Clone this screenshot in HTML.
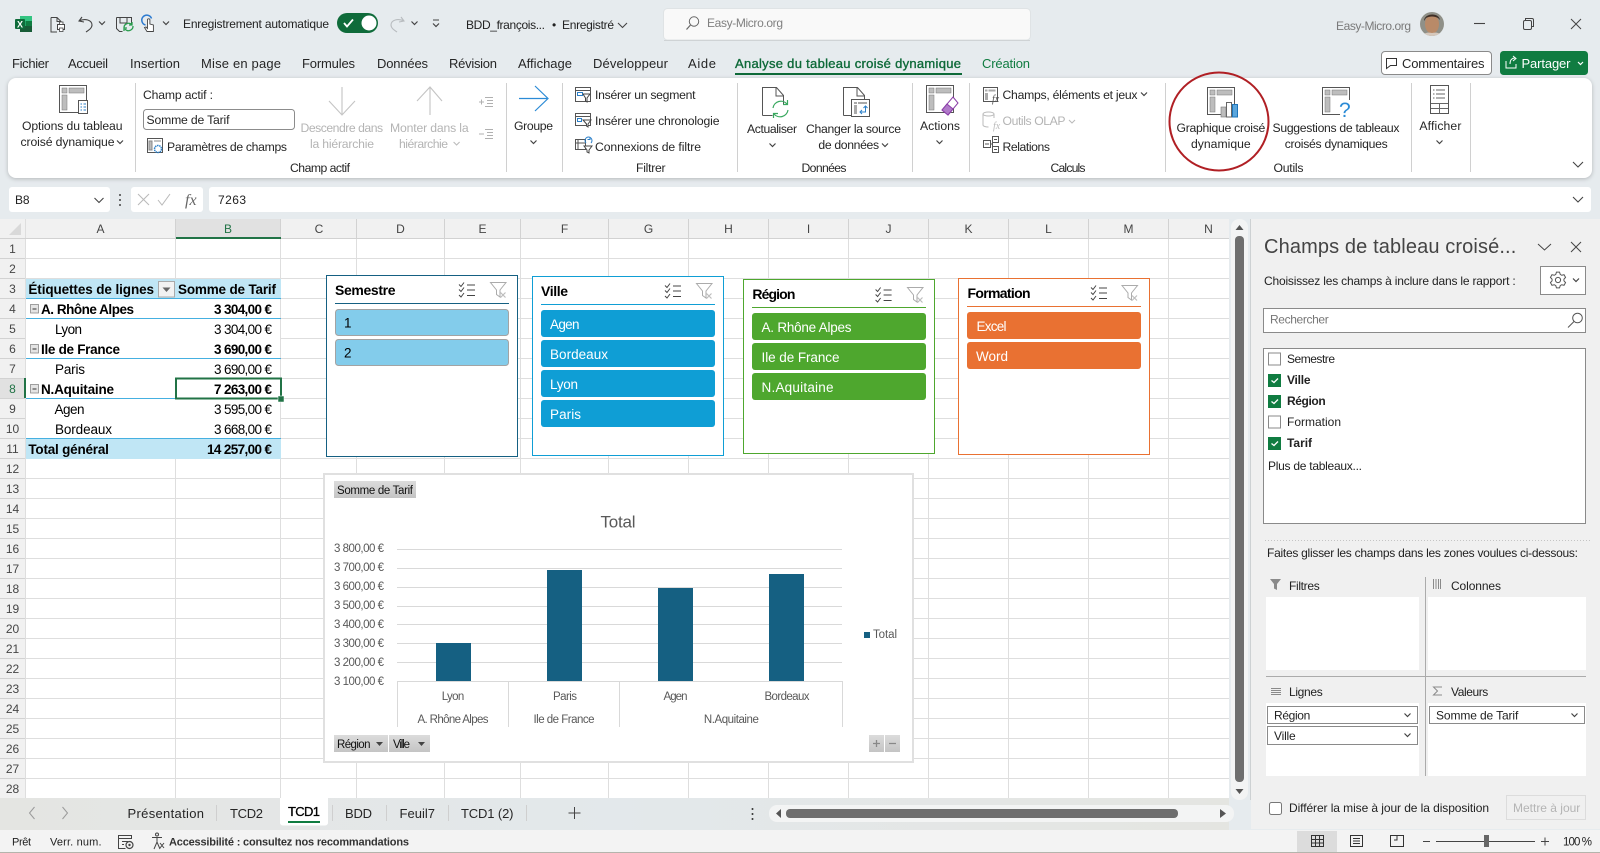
<!DOCTYPE html>
<html lang="fr"><head><meta charset="utf-8"><title>Excel</title>
<style>
html,body{margin:0;padding:0;background:#e6ebee;width:1600px;height:853px;overflow:hidden}
svg{display:block}
text{font-family:"Liberation Sans",sans-serif;font-size:12.2px;fill:#262626}
.d{fill:#b4b4b4}.b{font-weight:bold;fill:#000}.k{fill:#000;font-size:13.5px}
.h{fill:#454545;font-size:12px}.w{fill:#fff;font-size:13.5px}
.t{font-size:13px}.c{fill:#595959;font-size:11.5px}.p{font-size:12px;fill:#222}
.gr{fill:none;stroke:#555;stroke-width:1}
</style></head><body>
<svg width="1600" height="853" viewBox="0 0 1600 853" xmlns="http://www.w3.org/2000/svg">
<defs>
<g id="ca"><path d="M-3-1.5L0 1.5L3-1.5" fill="none" stroke="#444" stroke-width="1.2"/></g>
<g id="ms"><path d="M0 2l2 2 3-4M0 7l2 2 3-4M0 12.500l2 2 3-4" fill="none" stroke="#444" stroke-width="1"/><path d="M8 2.500H16M8 7.500H16M8 13H16" stroke="#444" stroke-width="1"/></g>
<g id="fc"><path d="M.5.500H16L10 8V15L6.500 12.500V8Z" fill="none" stroke="#ababab"/><path d="M10.500 10.500l5 5m0-5l-5 5" stroke="#bdbdbd" stroke-width="1.200"/></g>
<g id="pv"><rect x=".5" y=".5" width="27" height="27" fill="#fff" stroke="#555"/><rect x="3" y="3" width="5" height="5" fill="#bdbdbd" stroke="#777" stroke-width=".5"/><rect x="10" y="3" width="15" height="5" fill="#bdbdbd" stroke="#777" stroke-width=".5"/><rect x="3" y="10" width="5" height="15" fill="#bdbdbd" stroke="#777" stroke-width=".5"/></g>
<g id="cb"><rect width="13" height="13" fill="#107c41"/><path d="M3.500 6.500l2.500 2 4-4" fill="none" stroke="#fff" stroke-width="1.300"/></g>
</defs>

<rect width="1600" height="853" fill="#e6ebee"/>

<!-- title bar -->
<rect x="20" y="16" width="12" height="16" rx="1" fill="#21a366"/><rect x="20" y="16" width="12" height="5" fill="#33c481"/><rect x="20" y="26" width="12" height="6" fill="#185c37"/><rect x="26" y="21" width="6" height="5" fill="#107c41"/>
<rect x="15" y="19" width="10" height="10" rx="1" fill="#0f6b3a"/><text x="17" y="27.500" style="font-size:9px;font-weight:bold;fill:#fff">X</text>
<path d="M51 17.500h6l4 4v3M51 17.500V32h6M57 17.500v4h4" fill="none" stroke="#444"/><rect x="57.500" y="24.500" width="7" height="5" fill="#fff" stroke="#444"/><rect x="59.500" y="22" width="3.500" height="2.500" fill="#fff" stroke="#444" stroke-width=".8"/><rect x="59.500" y="28" width="3.500" height="3.500" fill="#fff" stroke="#444" stroke-width=".8"/>
<path d="M82 17l-3 4 5 1M79 21c6-3 13-1 13 4 0 3-3 5-6 7" fill="none" stroke="#444" stroke-width="1.100"/>
<use href="#ca" x="102" y="23"/>
<path d="M116.500 17.500h15v8M116.500 17.500v11l3 3h3M120 18v5h7v-5" fill="none" stroke="#444"/>
<path d="M124 28a4.500 4.500 0 0 1 8-3M133 26a4.500 4.500 0 0 1-8 3M132 22v3h-3M124 31v-3h3" fill="none" stroke="#2a9d4e" stroke-width="1.300"/>
<path d="M145.500 25a5 5 0 1 1 6-6.500" fill="none" stroke="#2d7bd0" stroke-width="1.500"/><path d="M147 31.500l-2.500-4 1.500-.5 1.500 1.500v-8.500a1.200 1.200 0 0 1 2.400 0v4l3.500 1v6.500z" fill="#fff" stroke="#444" stroke-width=".9"/>
<use href="#ca" x="166" y="23"/>
<text x="183" y="28" textLength="146" class="p">Enregistrement automatique</text>
<rect x="337" y="13" width="41" height="20" rx="10" fill="#0f6b3a"/><path d="M344 23l3 3.500 6-7" fill="none" stroke="#fff" stroke-width="1.800"/><circle cx="369" cy="23" r="7.500" fill="#fff"/>
<path d="M401 17l3 4-5 1M404 21c-6-3-13-1-13 4 0 3 3 5 6 7" fill="none" stroke="#b8bcbf" stroke-width="1.100"/>
<use href="#ca" x="414.500" y="23"/><path d="M433 20h6" stroke="#444"/><use href="#ca" x="436" y="25"/>
<text x="466" y="29" textLength="79" class="p">BDD_françois...</text><text x="552" y="29" class="p">•</text><text x="562" y="29" textLength="52" class="p">Enregistré</text>
<path d="M618 23l4.500 4.500L627 23" fill="none" stroke="#444" stroke-width="1.100"/>
<rect x="663.500" y="8.500" width="367" height="31.500" rx="4" fill="#f9f9f9" stroke="#dfe3e5"/><path d="M664 40.500h366" stroke="#cfd3d5"/>
<circle cx="694" cy="21.500" r="4.700" fill="none" stroke="#666"/><path d="M690.500 25l-4 4.500" stroke="#666" stroke-width="1.200"/>
<text x="707" y="27" textLength="76" class="p" style="fill:#808080">Easy-Micro.org</text>
<text x="1336" y="30" textLength="75" class="p" style="fill:#7a7a7a">Easy-Micro.org</text>
<clipPath id="av"><circle cx="1432" cy="24" r="12"/></clipPath>
<g clip-path="url(#av)"><rect x="1420" y="12" width="24" height="24" fill="#8f9088"/><ellipse cx="1432" cy="24" rx="7" ry="9.500" fill="#b98a68"/><path d="M1424 21c0-8 15-9 16-1l-2-2c-4-2-8-2-12 0z" fill="#3e2e26"/><path d="M1422 37c1-4 5-5 10-4 5-1 9 0 10 4z" fill="#d6c8bc"/></g>
<path d="M1474 23.500h11" stroke="#444" stroke-width="1.100"/>
<rect x="1523.500" y="20.500" width="8" height="9" rx="1.500" fill="none" stroke="#444"/><path d="M1525.500 20v-1.500h6.500a1.500 1.500 0 0 1 1.500 1.500v6.500h-1.500" fill="none" stroke="#444"/>
<path d="M1571 19l10 10M1581 19l-10 10" stroke="#444" stroke-width="1"/>

<!-- tabs -->
<g class="t">
<text x="12" y="68" textLength="37" class="t">Fichier</text>
<text x="68" y="68" textLength="40" class="t">Accueil</text>
<text x="130" y="68" textLength="50" class="t">Insertion</text>
<text x="201" y="68" textLength="80" class="t">Mise en page</text>
<text x="302" y="68" textLength="53" class="t">Formules</text>
<text x="377" y="68" textLength="51" class="t">Données</text>
<text x="449" y="68" textLength="48" class="t">Révision</text>
<text x="518" y="68" textLength="54" class="t">Affichage</text>
<text x="593" y="68" textLength="75" class="t">Développeur</text>
<text x="688" y="68" textLength="28" class="t">Aide</text>
<text x="735" y="68" textLength="226" class="t" style="fill:#0e6a39;stroke:#0e6a39;stroke-width:.35px">Analyse du tableau croisé dynamique</text>
<text x="982" y="68" textLength="48" class="t" style="fill:#107c41">Création</text>
</g>
<rect x="735" y="73" width="227" height="2" fill="#0e6a39"/>
<rect x="1381.500" y="51.500" width="110" height="23" rx="3.500" fill="#fff" stroke="#8a8a8a"/>
<path d="M1386.500 58.500h10v7h-6l-4 3z" fill="none" stroke="#333"/>
<text x="1402" y="68" textLength="82.500" class="t">Commentaires</text>
<rect x="1500" y="51" width="88" height="24" rx="3.500" fill="#107c41"/>
<path d="M1506 61v7h10v-4M1510 64c0-4 2-6 5-6M1513 56l3 2.500-3 2.500" fill="none" stroke="#fff"/>
<text x="1521.500" y="68" textLength="49" class="t" style="fill:#fff">Partager</text>
<path d="M1578 62l2.500 2.500L1583 62" fill="none" stroke="#fff" stroke-width="1.200"/>

<!-- ribbon -->
<rect x="8" y="78" width="1584" height="100" rx="8" fill="#fff" style="filter:drop-shadow(0 1px 2px rgba(0,0,0,.22))"/>
<path d="M135.500 83V172M506.500 83V172M562.500 83V172M737.500 83V172M912.500 83V172M969.500 83V172M1165.500 83V172M1411.500 83V172M1470.500 83V172" stroke="#d0d0d0"/>

<!-- options -->
<use href="#pv" x="59" y="85"/><rect x="78.500" y="100.500" width="9" height="13" fill="#fff" stroke="#555"/><path d="M80.500 104h1.500M83.500 104h2.500M80.500 107h1.500M83.500 107h2.500M80.500 110h1.500M83.500 110h2.500" stroke="#2a7fc9"/>
<text x="22" y="130" textLength="100.500">Options du tableau</text>
<text x="20.500" y="146" textLength="94">croisé dynamique</text><use href="#ca" x="120" y="142"/>

<text x="143" y="99" textLength="70">Champ actif :</text>
<rect x="143.500" y="109.500" width="151" height="20" rx="3" fill="#fff" stroke="#8c8c8c"/>
<text x="146.500" y="124" textLength="83">Somme de Tarif</text>
<rect x="147.500" y="138.500" width="15" height="14" fill="#fff" stroke="#555"/><path d="M149 141h3v9h-3zM154 141h7" stroke="#888" fill="#bbb"/><circle cx="158" cy="149" r="3.500" fill="none" stroke="#2a7fc9" stroke-width="1.500" stroke-dasharray="1.500 .7"/>
<text x="167" y="151" textLength="120">Paramètres de champs</text>

<path d="M342 87V114M329 101L342 115L355 101" fill="none" stroke="#c4c4c4" stroke-width="1.100"/>
<text x="300.500" y="132" textLength="82.600" class="d">Descendre dans</text>
<text x="310" y="148" textLength="64" class="d">la hiérarchie</text>
<path d="M430 115V88M417 101L430 87L442 101" fill="none" stroke="#c4c4c4" stroke-width="1.100"/>
<text x="390" y="132" textLength="78.600" class="d">Monter dans la</text>
<text x="399" y="148" textLength="49" class="d">hiérarchie</text>
<path d="M453.600 142l3 3 3-3" fill="none" stroke="#bbb" stroke-width="1.100"/>
<path d="M485 97.500h8M487 100.500h6M487 103.500h6M485 106.500h8M485 129.500h8M487 132.500h6M487 135.500h6M485 138.500h8M479 102h5M481.500 99.500v5M479 134h5" stroke="#b0b0b0"/>
<text x="290" y="172" textLength="60">Champ actif</text>

<path d="M519 98.500H547M535 86L548 98.500L535 111" fill="none" stroke="#2b8bd6" stroke-width="1.200"/>
<text x="514" y="130" textLength="39">Groupe</text><use href="#ca" x="533.500" y="142"/>

<!-- filtrer -->
<g fill="none" stroke="#555">
<rect x="575.500" y="87.500" width="15" height="14" fill="#fff"/><path d="M576 90.500h14"/><rect x="577.500" y="92.500" width="5" height="3" stroke="#2a7fc9"/><path d="M583 94h7l-3 4v4l-1.500-1v-3z" stroke="#444" fill="#fff"/>
<rect x="575.500" y="113.500" width="15" height="12" fill="#fff"/><path d="M576 116.500h14"/><rect x="577.500" y="118.500" width="4" height="3" stroke="#2a7fc9"/><path d="M583 120h8l-3 4v3l-1.500-1v-2z" stroke="#444" fill="#fff"/>
<path d="M575.500 139.500h10v10h-10zM578 139v10M575.500 143h10"/><path d="M584 146h8l-3 4v3l-2-1v-2z" stroke="#444" fill="#fff"/><path d="M586 143a3.500 3.500 0 1 1 5 0M590 137v2.500h-2.500" stroke="#2a7fc9"/>
</g>
<text x="595" y="99" textLength="100.500">Insérer un segment</text>
<text x="595" y="125" textLength="124.500">Insérer une chronologie</text>
<text x="595" y="151" textLength="106">Connexions de filtre</text>
<text x="636" y="172" textLength="29.600">Filtrer</text>

<!-- données -->
<path d="M762.500 115.500V87.500h14l7 8v9M776 88v8h7.500M762.500 115.500h10" fill="none" stroke="#555"/>
<path d="M773 108a8 8 0 0 1 14-4M788 110a8 8 0 0 1-14 4M787.500 100v4.500h-4.500M773.500 118v-4.500h4.500" fill="none" stroke="#39a85f" stroke-width="1.200"/>
<text x="747" y="133" textLength="50">Actualiser</text><use href="#ca" x="772.500" y="145"/>
<path d="M843.500 115.500V87.500h14l7 8v4M857 88v8h7.500M843.500 115.500h8" fill="none" stroke="#555"/>
<rect x="851.500" y="99.500" width="18" height="17" fill="#fff" stroke="#555"/><rect x="854" y="102" width="3" height="2" fill="#aaa"/><rect x="858" y="102" width="9" height="2" fill="#aaa"/><rect x="854" y="105" width="3" height="9" fill="#aaa"/><path d="M865.500 106v6h-5.500M862 110l-2 2 2 2M863.500 108l2-2 2 2" fill="none" stroke="#2a7fc9"/>
<text x="806" y="133" textLength="95">Changer la source</text>
<text x="818.400" y="149" textLength="60.700">de données</text><use href="#ca" x="885" y="145"/>
<text x="801.500" y="172" textLength="45">Données</text>

<!-- actions -->
<use href="#pv" x="926" y="85"/><path d="M953 97l5 6-10 12-6-5z" fill="#fff" stroke="#8b3ea8"/><path d="M947 104l6 5-5 6-6-5z" fill="#b07ac9" stroke="#8b3ea8"/>
<text x="920" y="130" textLength="40">Actions</text><use href="#ca" x="939.500" y="142"/>

<!-- calculs -->
<g fill="none" stroke="#555">
<rect x="983.500" y="87.500" width="14" height="14" fill="#fff"/><rect x="985" y="89.500" width="2.500" height="2" fill="#aaa" stroke="none"/><rect x="988.500" y="89.500" width="7" height="2" fill="#aaa" stroke="none"/><rect x="985" y="93" width="3" height="7" fill="#aaa" stroke="none"/>
<rect x="983.500" y="140.500" width="7" height="7" fill="#fff"/><rect x="992.500" y="136.500" width="6" height="6" fill="#fff"/><rect x="992.500" y="146.500" width="6" height="6" fill="#fff"/><path d="M985 144h4M994 139.500h3M994 149.500h3M990.500 144h2v-2M992.500 144v4"/>
</g>
<text x="992" y="102" style="font-family:'Liberation Serif',serif;font-style:italic;font-size:10px;fill:#555">fx</text>
<text x="1002.500" y="99" textLength="135">Champs, éléments et jeux</text><use href="#ca" x="1144" y="94"/>
<ellipse cx="988.500" cy="114" rx="5.500" ry="2" fill="none" stroke="#bbb"/><path d="M983 114v11c0 1 2 2 5.500 2M994 114v4" fill="none" stroke="#bbb"/><text x="993" y="129" style="font-family:'Liberation Serif',serif;font-style:italic;font-size:10px;fill:#bbb">fx</text>
<text x="1002.500" y="125" textLength="63" class="d">Outils OLAP</text>
<path d="M1069 120l3 3 3-3" fill="none" stroke="#bbb" stroke-width="1.100"/>
<text x="1002.500" y="151" textLength="47.500">Relations</text>
<text x="1050.500" y="172" textLength="35">Calculs</text>

<!-- outils -->
<use href="#pv" x="1207" y="87"/><rect x="1221" y="107" width="5" height="10" fill="#bdbdbd" stroke="#777" stroke-width=".6"/><rect x="1226.500" y="102.500" width="5" height="14.500" fill="#fff" stroke="#666"/><rect x="1232.500" y="104.500" width="5" height="12.500" fill="#5aa6dd" stroke="#1f74b8"/>
<text x="1176.500" y="132" textLength="88.800">Graphique croisé</text>
<text x="1191" y="148" textLength="59.700">dynamique</text>
<ellipse cx="1219" cy="121.500" rx="49.500" ry="49" fill="none" stroke="#b01f24" stroke-width="2"/>
<use href="#pv" x="1322" y="87"/><rect x="1340" y="100" width="13" height="17" fill="#fff"/><text x="1339" y="117" style="font-size:21px;fill:#2b8bd6">?</text>
<text x="1272.500" y="132" textLength="127">Suggestions de tableaux</text>
<text x="1284.700" y="148" textLength="103">croisés dynamiques</text>
<text x="1273.500" y="172" textLength="30">Outils</text>
<rect x="1430.500" y="85.500" width="18" height="28" fill="#fff" stroke="#555"/><path d="M1431 103.500h17M1431 108.500h17M1439.500 103.500v10M1433 90h1.500M1436 90h9M1433 94h1.500M1436 94h9M1433 98h1.500M1436 98h9" stroke="#666"/>
<text x="1419.400" y="130" textLength="42">Afficher</text><use href="#ca" x="1439.500" y="142"/>
<path d="M1573 162l5 5 5-5" fill="none" stroke="#444" stroke-width="1.100"/>

<!-- formula bar -->
<rect x="9" y="187" width="101" height="25" rx="3" fill="#fff"/>
<text x="15" y="204" textLength="14.500" class="p">B8</text>
<path d="M94.500 198l4.500 4.500 4.500-4.500" fill="none" stroke="#444" stroke-width="1.100"/>
<circle cx="120" cy="195" r="1" fill="#444"/><circle cx="120" cy="200" r="1" fill="#444"/><circle cx="120" cy="205" r="1" fill="#444"/>
<rect x="131" y="187" width="72" height="25" rx="3" fill="#fff"/>
<path d="M138 194l11 11M149 194l-11 11M158 200l4 5 8-11" fill="none" stroke="#b9b9b9" stroke-width="1"/>
<text x="185" y="205" style="font-family:'Liberation Serif',serif;font-style:italic;font-size:16px;fill:#666">fx</text>
<rect x="209" y="187" width="1382" height="25" rx="3" fill="#fff"/>
<text x="218" y="204" textLength="28" class="p">7263</text>
<path d="M1573 197l5 5 5-5" fill="none" stroke="#444" stroke-width="1.100"/>

<!-- sheet -->
<rect x="0" y="219" width="1229" height="579" fill="#fff"/>
<rect x="0" y="219" width="1229" height="20" fill="#f1f1f1"/>
<rect x="0" y="239" width="25" height="559" fill="#f1f1f1"/>
<path d="M21 223V235H9Z" fill="#d9d9d9"/>
<rect x="176" y="219" width="105" height="20" fill="#e1e1e1"/>
<rect x="0" y="378" width="25" height="20" fill="#e1e1e1"/>
<path d="M25.500 219V798M175.500 239V798M280.500 239V798M356.500 239V798M444.500 239V798M520.500 239V798M608.500 239V798M688.500 239V798M768.500 239V798M848.500 239V798M928.500 239V798M1008.500 239V798M1088.500 239V798M1168.500 239V798" stroke="#dedede"/>
<path d="M26 258.500H1229M26 278.500H1229M26 298.500H1229M26 318.500H1229M26 338.500H1229M26 358.500H1229M26 378.500H1229M26 398.500H1229M26 418.500H1229M26 438.500H1229M26 458.500H1229M26 478.500H1229M26 498.500H1229M26 518.500H1229M26 538.500H1229M26 558.500H1229M26 578.500H1229M26 598.500H1229M26 618.500H1229M26 638.500H1229M26 658.500H1229M26 678.500H1229M26 698.500H1229M26 718.500H1229M26 738.500H1229M26 758.500H1229M26 778.500H1229" stroke="#dedede"/>
<path d="M175.500 219V238M280.500 219V238M356.500 219V238M444.500 219V238M520.500 219V238M608.500 219V238M688.500 219V238M768.500 219V238M848.500 219V238M928.500 219V238M1008.500 219V238M1088.500 219V238M1168.500 219V238" stroke="#d2d2d2"/>
<path d="M0 238.500H1229M0 258.500H25M0 278.500H25M0 298.500H25M0 318.500H25M0 338.500H25M0 358.500H25M0 378.500H25M0 398.500H25M0 418.500H25M0 438.500H25M0 458.500H25M0 478.500H25M0 498.500H25M0 518.500H25M0 538.500H25M0 558.500H25M0 578.500H25M0 598.500H25M0 618.500H25M0 638.500H25M0 658.500H25M0 678.500H25M0 698.500H25M0 718.500H25M0 738.500H25M0 758.500H25M0 778.500H25" stroke="#d2d2d2"/>
<rect x="176" y="237" width="105" height="2" fill="#217346"/>
<rect x="24" y="378" width="2" height="20" fill="#217346"/>
<g text-anchor="middle">
<text x="100.500" y="233" class="h">A</text><text x="228" y="233" class="h" style="fill:#217346">B</text><text x="319" y="233" class="h">C</text><text x="400.500" y="233" class="h">D</text><text x="482.500" y="233" class="h">E</text><text x="564.500" y="233" class="h">F</text><text x="648.500" y="233" class="h">G</text><text x="728.500" y="233" class="h">H</text><text x="808.500" y="233" class="h">I</text><text x="888.500" y="233" class="h">J</text><text x="968.500" y="233" class="h">K</text><text x="1048.500" y="233" class="h">L</text><text x="1128.500" y="233" class="h">M</text><text x="1208.500" y="233" class="h">N</text>
<text x="12.500" y="253" class="h">1</text><text x="12.500" y="273" class="h">2</text><text x="12.500" y="293" class="h">3</text><text x="12.500" y="313" class="h">4</text><text x="12.500" y="333" class="h">5</text><text x="12.500" y="353" class="h">6</text><text x="12.500" y="373" class="h">7</text><text x="12.500" y="393" class="h" style="fill:#217346">8</text><text x="12.500" y="413" class="h">9</text><text x="12.500" y="433" class="h">10</text><text x="12.500" y="453" class="h">11</text><text x="12.500" y="473" class="h">12</text><text x="12.500" y="493" class="h">13</text><text x="12.500" y="513" class="h">14</text><text x="12.500" y="533" class="h">15</text><text x="12.500" y="553" class="h">16</text><text x="12.500" y="573" class="h">17</text><text x="12.500" y="593" class="h">18</text><text x="12.500" y="613" class="h">19</text><text x="12.500" y="633" class="h">20</text><text x="12.500" y="653" class="h">21</text><text x="12.500" y="673" class="h">22</text><text x="12.500" y="693" class="h">23</text><text x="12.500" y="713" class="h">24</text><text x="12.500" y="733" class="h">25</text><text x="12.500" y="753" class="h">26</text><text x="12.500" y="773" class="h">27</text><text x="12.500" y="793" class="h">28</text>
</g>

<!-- pivot -->
<rect x="26" y="279" width="254.500" height="180" fill="#fff"/>
<path d="M280.500 279V459" stroke="#dedede"/>
<rect x="26" y="279" width="255" height="19" fill="#c0e6f5"/>
<rect x="26" y="439" width="255" height="20" fill="#c0e6f5"/>
<path d="M26 298.500H281M26 318.500H281M26 358.500H281M26 398.500H175M26 438.500H281" stroke="#45b0e1"/>
<text x="28.400" y="294" textLength="125.600" class="b" style="font-size:13.500px">Étiquettes de lignes</text>
<rect x="158.500" y="281.500" width="16" height="15.500" fill="#f2f2f2" stroke="#aaa"/><path d="M162.500 287.500h8l-4 4.500z" fill="#666"/>
<text x="178" y="294" textLength="98" class="b" style="font-size:13.500px">Somme de Tarif</text>
<g fill="#e4e4e4" stroke="#8a8a8a" stroke-width=".8"><rect x="30.500" y="304.500" width="8" height="8.500"/><rect x="30.500" y="344.500" width="8" height="8.500"/><rect x="30.500" y="384.500" width="8" height="8.500"/></g>
<path d="M32.500 309h4M32.500 349h4M32.500 389h4" stroke="#333"/>
<text x="41" y="314" textLength="93" class="b" style="font-size:13.500px">A. Rhône Alpes</text>
<text x="41" y="354" textLength="79" class="b" style="font-size:13.500px">Ile de France</text>
<text x="41" y="394" textLength="73" class="b" style="font-size:13.500px">N.Aquitaine</text>
<text x="55" y="334" textLength="27" class="k">Lyon</text>
<text x="55" y="374" textLength="30" class="k">Paris</text>
<text x="54.500" y="414" textLength="30" class="k">Agen</text>
<text x="55" y="434" textLength="57" class="k">Bordeaux</text>
<text x="28.400" y="454" textLength="80.500" class="b" style="font-size:13.500px">Total général</text>
<g text-anchor="end">
<text x="272" y="314" textLength="58" class="b" style="font-size:13.500px">3 304,00 €</text>
<text x="272" y="334" textLength="58" class="k">3 304,00 €</text>
<text x="272" y="354" textLength="58" class="b" style="font-size:13.500px">3 690,00 €</text>
<text x="272" y="374" textLength="58" class="k">3 690,00 €</text>
<text x="272" y="394" textLength="58" class="b" style="font-size:13.500px">7 263,00 €</text>
<text x="272" y="414" textLength="58" class="k">3 595,00 €</text>
<text x="272" y="434" textLength="58" class="k">3 668,00 €</text>
<text x="272" y="454" textLength="65" class="b" style="font-size:13.500px">14 257,00 €</text>
</g>
<rect x="176" y="378.500" width="105" height="20" fill="none" stroke="#217346" stroke-width="2"/>
<rect x="278" y="396" width="6" height="6" fill="#217346" stroke="#fff" stroke-width=".5"/>

<!-- slicers -->
<rect x="326.500" y="275.500" width="191" height="181" fill="#fff" stroke="#156082"/>
<text x="335" y="295" textLength="60.500" class="b" style="font-size:14px">Semestre</text>
<use href="#ms" x="459" y="282.500"/><use href="#fc" x="490" y="282"/>
<path d="M335 303.500H509" stroke="#156082"/>
<rect x="335.500" y="309.500" width="173" height="26" rx="3" fill="#83cceb" stroke="#a3a3a3"/>
<rect x="335.500" y="339.500" width="173" height="26" rx="3" fill="#83cceb" stroke="#a3a3a3"/>
<text x="344" y="327.500" class="k">1</text><text x="344" y="357.500" class="k">2</text>

<rect x="532.500" y="276.500" width="191" height="179" fill="#fff" stroke="#0f9ed5"/>
<text x="541" y="296" textLength="27" class="b" style="font-size:14px">Ville</text>
<use href="#ms" x="665" y="283.500"/><use href="#fc" x="696" y="283"/>
<path d="M541 304.500H715" stroke="#0f9ed5"/>
<g fill="#0f9ed5"><rect x="541" y="310" width="174" height="27" rx="3"/><rect x="541" y="340" width="174" height="27" rx="3"/><rect x="541" y="370" width="174" height="27" rx="3"/><rect x="541" y="400" width="174" height="27" rx="3"/></g>
<text x="550" y="329" textLength="29.500" class="w">Agen</text><text x="550" y="359" textLength="58" class="w">Bordeaux</text><text x="550" y="389" textLength="28" class="w">Lyon</text><text x="550" y="419" textLength="31" class="w">Paris</text>

<rect x="743.500" y="279.500" width="191" height="174" fill="#fff" stroke="#4ea72e"/>
<text x="752.400" y="299" textLength="43" class="b" style="font-size:14px">Région</text>
<use href="#ms" x="875.600" y="287.500"/><use href="#fc" x="907" y="287"/>
<path d="M752 307.500H926" stroke="#4ea72e"/>
<g fill="#4ea72e"><rect x="752" y="313" width="174" height="27" rx="3"/><rect x="752" y="343" width="174" height="27" rx="3"/><rect x="752" y="373" width="174" height="27" rx="3"/></g>
<text x="761.500" y="332" textLength="90" class="w">A. Rhône Alpes</text><text x="761.500" y="362" textLength="78" class="w">Ile de France</text><text x="761.500" y="392" textLength="72" class="w">N.Aquitaine</text>

<rect x="958.500" y="278.500" width="191" height="176" fill="#fff" stroke="#e97132"/>
<text x="967.500" y="298" textLength="63" class="b" style="font-size:14px">Formation</text>
<use href="#ms" x="1091" y="285.500"/><use href="#fc" x="1121.500" y="285"/>
<path d="M967 306.500H1141" stroke="#e97132"/>
<g fill="#e97132"><rect x="967" y="312" width="174" height="27" rx="3"/><rect x="967" y="342" width="174" height="27" rx="3"/></g>
<text x="976.500" y="331" textLength="30" class="w">Excel</text><text x="976" y="361" textLength="32" class="w">Word</text>

<!-- chart -->
<rect x="324" y="474" width="589" height="288" fill="#fff" stroke="#e0e0e0" stroke-width="2"/>
<defs><linearGradient id="bt" x1="0" x2="0" y1="0" y2="1"><stop offset="0" stop-color="#dcdcdc"/><stop offset="1" stop-color="#c4c4c4"/></linearGradient></defs>
<rect x="334" y="481" width="82" height="17" fill="url(#bt)"/>
<text x="337" y="494" textLength="76" style="font-size:11.500px;fill:#111">Somme de Tarif</text>
<text x="618" y="527.500" text-anchor="middle" textLength="35" style="font-size:17px;fill:#595959">Total</text>
<path d="M397 549.500H842M397 568.500H842M397 587.500H842M397 606.500H842M397 624.500H842M397 643.500H842M397 662.500H842M397 681.500H842M397.500 681V727M508.500 681V727M619.500 681V727M842.500 681V727" stroke="#d9d9d9"/>
<g fill="#156082"><rect x="436" y="643" width="35" height="38"/><rect x="547" y="570" width="35" height="111"/><rect x="658" y="588" width="35" height="93"/><rect x="769" y="574" width="35" height="107"/></g>
<text x="334" y="552" textLength="50" class="c">3 800,00 €</text><text x="334" y="571" textLength="50" class="c">3 700,00 €</text><text x="334" y="590" textLength="50" class="c">3 600,00 €</text><text x="334" y="609" textLength="50" class="c">3 500,00 €</text><text x="334" y="628" textLength="50" class="c">3 400,00 €</text><text x="334" y="647" textLength="50" class="c">3 300,00 €</text><text x="334" y="666" textLength="50" class="c">3 200,00 €</text><text x="334" y="685" textLength="50" class="c">3 100,00 €</text>
<g text-anchor="middle"><text x="453" y="700" textLength="22.600" class="c">Lyon</text><text x="565" y="700" textLength="24" class="c">Paris</text><text x="675.500" y="700" textLength="24" class="c">Agen</text><text x="787" y="700" textLength="45" class="c">Bordeaux</text><text x="453" y="723" textLength="71" class="c">A. Rhône Alpes</text><text x="564" y="723" textLength="61" class="c">Ile de France</text><text x="731.400" y="723" textLength="55" class="c">N.Aquitaine</text></g>
<rect x="864" y="632" width="6" height="6" fill="#156082"/>
<text x="873" y="638" textLength="24" class="c">Total</text>
<rect x="334" y="735" width="54" height="17" fill="url(#bt)"/><rect x="389" y="735" width="41" height="17" fill="url(#bt)"/>
<text x="337" y="748" textLength="33.500" style="font-size:11.500px;fill:#111">Région</text><path d="M376 742h7l-3.500 4z" fill="#444"/>
<text x="393" y="748" textLength="17" style="font-size:11.500px;fill:#111">Ville</text><path d="M418 742h7l-3.500 4z" fill="#444"/>
<rect x="869" y="735" width="15" height="17" fill="url(#bt)"/><rect x="885" y="735" width="15" height="17" fill="url(#bt)"/>
<path d="M873 743.500h7M876.500 740v7M889 743.500h7" stroke="#888" stroke-width="1.300"/>

<!-- v scrollbar -->
<rect x="1231" y="219" width="17" height="581" rx="8" fill="#f3f4f4"/>
<path d="M1235.500 230l4-5 4 5z" fill="#555"/>
<rect x="1235" y="236" width="9" height="546" rx="4" fill="#6e6e6e"/>
<path d="M1235.500 789l4 5 4-5z" fill="#555"/>

<!-- panel -->
<rect x="1251" y="219" width="349" height="610" fill="#f0f0f0"/>
<path d="M1250.500 219V829" stroke="#cdd1d3"/>
<text x="1264" y="253" textLength="252.300" style="font-size:20px;fill:#444">Champs de tableau croisé...</text>
<path d="M1538 244l6.500 6 6.500-6M1571 242l10 10M1581 242l-10 10" fill="none" stroke="#444"/>
<text x="1264" y="285" textLength="251.700" class="p">Choisissez les champs à inclure dans le rapport :</text>
<rect x="1540.500" y="266.500" width="45" height="28" fill="#fff" stroke="#8a8a8a"/>
<g transform="translate(1558 280)" fill="none" stroke="#555"><circle r="2.600"/><path d="M5.940 .84L7.560 2.600L6.040 5.250L3.690 4.730L2.250 5.560L1.530 7.850L-1.530 7.850L-2.250 5.560L-3.690 4.730L-6.040 5.250L-7.560 2.600L-5.940 .84L-5.940 -.84L-7.560 -2.600L-6.040 -5.250L-3.690 -4.730L-2.250 -5.560L-1.530 -7.850L1.530 -7.850L2.250 -5.560L3.690 -4.730L6.040 -5.250L7.560 -2.600L5.940 -.84Z"/></g>
<use href="#ca" x="1576" y="280"/>
<rect x="1263.500" y="308.500" width="322" height="24" fill="#fff" stroke="#8a8a8a"/>
<text x="1270" y="323.500" textLength="58.700" class="p" style="fill:#777">Rechercher</text>
<circle cx="1577.500" cy="318" r="4.800" fill="none" stroke="#555"/><path d="M1574 321.500l-6 6" stroke="#555"/>
<rect x="1263.500" y="348.500" width="322" height="175" fill="#fff" stroke="#8a8a8a"/>
<rect x="1268.500" y="353" width="12" height="12" fill="#fff" stroke="#8a8a8a"/>
<use href="#cb" x="1268" y="374"/><use href="#cb" x="1268" y="395"/>
<rect x="1268.500" y="416" width="12" height="12" fill="#fff" stroke="#8a8a8a"/>
<use href="#cb" x="1268" y="437"/>
<text x="1287" y="363" textLength="48" class="p">Semestre</text>
<text x="1287" y="384" textLength="23.500" class="p" style="font-weight:bold">Ville</text>
<text x="1287" y="405" textLength="38.700" class="p" style="font-weight:bold">Région</text>
<text x="1287" y="426" textLength="54" class="p">Formation</text>
<text x="1287" y="447" textLength="25" class="p" style="font-weight:bold">Tarif</text>
<text x="1268" y="470" textLength="94" class="p">Plus de tableaux...</text>
<path d="M1265 540.500H1590" stroke="#c4c4c4" stroke-dasharray="1 2"/>
<text x="1267" y="557" textLength="311" class="p">Faites glisser les champs dans les zones voulues ci-dessous:</text>
<path d="M1270 579h11l-4 5v6l-3-1.500V584z" fill="#8a8a8a"/>
<text x="1289" y="590" textLength="30.700" class="p">Filtres</text>
<path d="M1433.500 579v10M1436 579v10M1438.500 579v10M1440.500 579v10" stroke="#8a8a8a"/>
<text x="1451" y="590" textLength="50" class="p">Colonnes</text>
<rect x="1266" y="597" width="153" height="73" fill="#fff"/><rect x="1428" y="597" width="158" height="73" fill="#fff"/>
<path d="M1425.500 577V776M1266 676.500H1586" stroke="#ababab"/>
<path d="M1271 688.500h10M1271 690.500h10M1271 692.500h10M1271 694.500h10" stroke="#8a8a8a"/>
<text x="1289" y="696" textLength="33.700" class="p">Lignes</text>
<path d="M1442 687h-8.500l4 4-4 4h8.500" fill="none" stroke="#8a8a8a"/>
<text x="1451" y="696" textLength="37.300" class="p">Valeurs</text>
<rect x="1266" y="703" width="153" height="73" fill="#fff"/><rect x="1428" y="703" width="158" height="73" fill="#fff"/>
<rect x="1267.500" y="706.500" width="150" height="17" fill="#fff" stroke="#8a8a8a"/>
<rect x="1267.500" y="726.500" width="150" height="18" fill="#fff" stroke="#8a8a8a"/>
<rect x="1429.500" y="706.500" width="155" height="17" fill="#fff" stroke="#8a8a8a"/>
<text x="1274" y="719.500" textLength="36.300" class="p">Région</text>
<text x="1274" y="740" textLength="21.700" class="p">Ville</text>
<text x="1436" y="719.500" textLength="82.300" class="p">Somme de Tarif</text>
<use href="#ca" x="1407.500" y="715"/><use href="#ca" x="1407.500" y="735"/><use href="#ca" x="1574.500" y="715"/>
<rect x="1269.500" y="802.500" width="12" height="12" rx="2" fill="#fff" stroke="#777"/>
<text x="1289" y="812" textLength="200" class="p">Différer la mise à jour de la disposition</text>
<rect x="1506.500" y="795.500" width="79" height="24" fill="#f0f0f0" stroke="#dcdcdc"/>
<text x="1513" y="812" textLength="67.300" class="p" style="fill:#b4b4b4">Mettre à jour</text>

<!-- sheet tabs -->
<defs><linearGradient id="tb" x1="0" x2="1" y1="0" y2="0"><stop offset="0" stop-color="#e4e5e2"/><stop offset=".5" stop-color="#e3e8eb"/><stop offset="1" stop-color="#e4e5e1"/></linearGradient></defs>
<rect x="0" y="798" width="1229" height="32" fill="url(#tb)"/>
<rect x="1229" y="800" width="22" height="30" fill="#e6ebee"/>
<path d="M34.500 807l-5 6 5 6M62.500 807l5 6-5 6" fill="none" stroke="#9a9a9a"/>
<path d="M216.500 805v16M332.500 805v16M386.500 805v16M448.500 805v16M526.500 805v16" stroke="#cfcfcf"/>
<text x="127.500" y="818" textLength="76.500" class="t">Présentation</text>
<text x="230" y="818" textLength="33" class="t">TCD2</text>
<path d="M280 798h48v24a3 3 0 0 1-3 3.500h-42a3 3 0 0 1-3-3.500z" fill="#fff"/>
<text x="288" y="816" textLength="32" class="t" style="fill:#000;stroke:#000;stroke-width:.3px">TCD1</text>
<rect x="288" y="821" width="32" height="2" fill="#107c41"/>
<text x="345" y="818" textLength="27" class="t">BDD</text>
<text x="399.500" y="818" textLength="35.500" class="t">Feuil7</text>
<text x="461" y="818" textLength="52.500" class="t">TCD1 (2)</text>
<path d="M574.500 807v12M568.500 813h12" stroke="#444"/>
<circle cx="752.500" cy="809" r="1" fill="#333"/><circle cx="752.500" cy="814" r="1" fill="#333"/><circle cx="752.500" cy="819" r="1" fill="#333"/>
<rect x="769" y="805" width="465" height="17" rx="8" fill="#f3f4f4"/>
<path d="M781 809l-5 4.500 5 4.500zM1220 809l6 4.500-6 4.500z" fill="#555"/>
<rect x="786" y="809" width="392" height="9" rx="4" fill="#6e6e6e"/>

<!-- status -->
<rect x="0" y="830" width="1600" height="22" fill="#f3f3f3"/>
<rect x="0" y="852" width="1600" height="1" fill="#b4b4ac"/>
<text x="12" y="845.500" textLength="19" class="p" style="font-size:11px">Prêt</text>
<text x="50" y="845.500" textLength="51.500" class="p" style="font-size:11px">Verr. num.</text>
<path d="M118.500 835.500h13v3h-13zM118.500 838.500v10h7M122 841.500h6M122 844.500h2" fill="none" stroke="#444"/><circle cx="129.500" cy="845" r="3.500" fill="none" stroke="#444" stroke-width="1.200"/><circle cx="129.500" cy="845" r="1.200" fill="#444"/>
<circle cx="157" cy="834.500" r="1.500" fill="none" stroke="#444"/><path d="M152 837.500h10M157 837.500v4M154 849l3-7 3 7M160 843l4 5M164 843l-4 5" fill="none" stroke="#444"/>
<text x="169" y="845.500" textLength="240" class="p" style="font-size:11px;font-weight:bold;fill:#333">Accessibilité : consultez nos recommandations</text>
<rect x="1297" y="831" width="40" height="21" fill="#dcdcdc"/>
<path d="M1311.500 835.500h12v11h-12zM1311.500 839.500h12M1311.500 843h12M1315.500 835.500v11M1319.500 835.500v11" fill="none" stroke="#333"/>
<path d="M1350.500 835.500h12v11h-12zM1353 838.500h7M1353 841h7M1353 843.500h7" fill="none" stroke="#333"/>
<path d="M1390.500 846.500v-11h13v11zM1397 836v4h-3" fill="none" stroke="#333"/>
<path d="M1423 841.500h7M1436 841.500h99M1541 841.500h8M1545 837.500v8" stroke="#444"/>
<rect x="1484" y="835" width="5" height="12" fill="#666"/>
<text x="1563" y="845.500" textLength="29" class="p" style="font-size:11.500px">100 %</text>
</svg>
</body></html>
